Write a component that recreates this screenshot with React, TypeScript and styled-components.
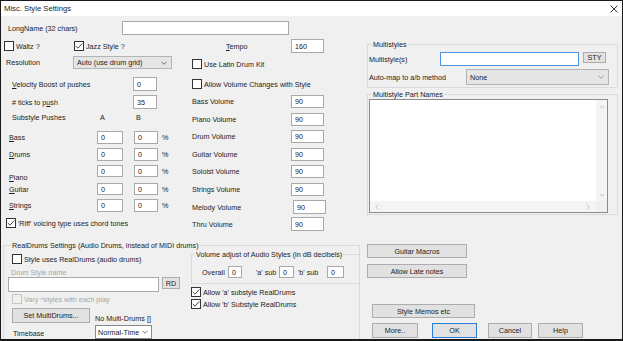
import React from 'react';
import styled, { createGlobalStyle } from 'styled-components';

const Global = createGlobalStyle`
  html, body { margin: 0; padding: 0; background: #fff; }
  body { font-family: "Liberation Sans", Arial, sans-serif; font-size: 7.2px; color: #1c1c1c; }
  * { box-sizing: border-box; }
`;

const Window = styled.div`
  width: 623px; height: 341px;
  border: 1px solid #1a1a1a; border-bottom-width: 2px;
  display: flex; flex-direction: column; background: #f0f0f0; overflow: hidden;
`;
const TitleBar = styled.div`
  height: 15px; flex: none; background: #fff;
  display: flex; align-items: center; justify-content: space-between;
  padding: 0 4px 0 3px; font-size: 7.7px;
`;
const Body = styled.div`
  flex: 1; display: flex; min-height: 0;
`;
const LeftArea = styled.div`
  width: 359px; flex: none; display: flex; flex-direction: column;
`;
const RightArea = styled.div`
  flex: 1; display: flex; flex-direction: column; padding: 24px 0 0 6px;
`;
const Cols = styled.div`
  display: flex; flex: none;
`;
const Col = styled.div<{ $w?: number }>`
  display: flex; flex-direction: column;
  ${p => (p.$w ? `width: ${p.$w}px; flex: none;` : 'flex: 1;')}
`;
const Row = styled.div<{ $mt?: number; $h: number; $pl?: number }>`
  display: flex; align-items: center; flex: none; white-space: nowrap;
  height: ${p => p.$h}px; margin-top: ${p => p.$mt ?? 0}px; padding-left: ${p => p.$pl ?? 0}px;
`;
const Label = styled.span<{ $w?: number; $muted?: boolean; $drop?: number; $ml?: number }>`
  flex: none; line-height: 9px;
  width: ${p => (p.$w ? `${p.$w}px` : 'auto')};
  margin-left: ${p => p.$ml ?? 0}px;
  color: ${p => (p.$muted ? '#a6a6a6' : '#1c1c1c')};
  ${p => (p.$drop !== undefined ? `align-self: flex-start; margin-top: ${p.$drop}px;` : '')}
`;
const Edit = styled.input<{ $w: number; $h?: number; $focus?: boolean; $ml?: number }>`
  flex: none; margin: 0 0 0 ${p => p.$ml ?? 0}px; padding: 0 0 0 3px;
  width: ${p => p.$w}px; height: ${p => (p.$h ? `${p.$h}px` : '100%')};
  border: 1px solid ${p => (p.$focus ? '#4a95d9' : '#a9a9a9')};
  background: #fff; font: inherit; color: #1c1c1c; outline: none;
`;
const Combo = styled.div<{ $w: number; $h?: number; $white?: boolean }>`
  flex: none; width: ${p => p.$w}px; height: ${p => (p.$h ? `${p.$h}px` : '100%')};
  border: 1px solid ${p => (p.$white ? '#8a8a8a' : '#b4b4b4')};
  background: ${p => (p.$white ? '#fff' : '#e5e5e5')};
  display: flex; align-items: center; justify-content: space-between; gap: 1px;
  padding: ${p => (p.$white ? '0 3px 0 2px' : '0 4px 0 3px')}; overflow: hidden;
`;
const ComboText = styled.span`
  overflow: hidden; white-space: nowrap; line-height: 9px;
`;
const Btn = styled.button<{ $w: number; $h?: number; $primary?: boolean; $ml?: number; $top?: boolean }>`
  flex: none; margin: 0 0 0 ${p => p.$ml ?? 0}px; padding: 0;
  width: ${p => p.$w}px; height: ${p => (p.$h ? `${p.$h}px` : '100%')};
  border: 1px solid ${p => (p.$primary ? '#2a7fd4' : '#adadad')};
  background: #e1e1e1; font: inherit; color: #1c1c1c; line-height: 9px;
  ${p => (p.$top ? 'align-self: flex-start;' : '')}
`;
const CheckWrap = styled.label<{ $w?: number }>`
  display: flex; align-items: center; flex: none;
  width: ${p => (p.$w ? `${p.$w}px` : 'auto')};
`;
const Box = styled.span<{ $disabled?: boolean }>`
  width: 10px; height: 10px; flex: none;
  border: 1px solid ${p => (p.$disabled ? '#c6c6c6' : '#333')};
  background: ${p => (p.$disabled ? '#f0f0f0' : '#fff')};
  display: flex; align-items: center; justify-content: center;
`;
const CheckText = styled.span<{ $disabled?: boolean }>`
  margin-left: 2px; line-height: 9px; color: ${p => (p.$disabled ? '#a6a6a6' : '#1c1c1c')};
`;
const Group = styled.fieldset<{ $w: number; $mt?: number; $ml?: number; $pb?: number; $open?: boolean }>`
  margin: ${p => p.$mt ?? 0}px 0 0 ${p => p.$ml ?? 0}px;
  padding: 0 0 ${p => p.$pb ?? 0}px 0;
  width: ${p => p.$w}px; min-width: 0; flex: none;
  border: 1px solid #dadada;
  ${p => (p.$open ? 'border-bottom: none; flex: 1;' : '')}
`;
const Legend = styled.legend<{ $ml: number }>`
  margin-left: ${p => p.$ml}px; padding: 0 1px; line-height: 9px; font-size: 7.2px;
`;
const GroupInner = styled.div<{ $pl?: number }>`
  display: flex; flex-direction: column; padding-left: ${p => p.$pl ?? 0}px;
`;
const DrumsBody = styled.div`
  display: flex;
`;
const ListBox = styled.div`
  margin-left: 1px; width: 239px; height: 114px;
  border: 1px solid #8c8c8c; background: #fff;
  display: grid; grid-template-columns: 1fr 11px; grid-template-rows: 1fr 11px;
`;
const ScrollV = styled.div`
  background: #f4f4f4; display: flex; flex-direction: column; justify-content: space-between;
  align-items: center; padding: 5px 0 4px;
`;
const ScrollH = styled.div`
  background: #f4f4f4; display: flex; justify-content: space-between; align-items: center;
  padding: 0 6px 0 5px;
`;
const Corner = styled.div`
  background: #f0f0f0;
`;
const ListArea = styled.div``;
const BtnRow = styled.div<{ $mt: number; $h: number; $pl?: number }>`
  display: flex; flex: none; height: ${p => p.$h}px; margin-top: ${p => p.$mt}px; padding-left: ${p => p.$pl ?? 0}px;
`;

const Chevron = ({ dir = 'down', color = '#555' }: { dir?: 'down' | 'up' | 'left' | 'right'; color?: string }) => {
  const pts = {
    down: '0.5,0.5 3,3 5.5,0.5',
    up: '0.5,3 3,0.5 5.5,3',
    left: '3,0.5 0.5,3 3,5.5',
    right: '0.5,0.5 3,3 0.5,5.5',
  }[dir];
  const vertical = dir === 'down' || dir === 'up';
  return (
    <svg width={vertical ? 6 : 4} height={vertical ? 4 : 6} viewBox={vertical ? '0 0 6 3.5' : '0 0 3.5 6'} style={{ flex: 'none' }}>
      <polyline points={pts} fill="none" stroke={color} strokeWidth="0.8" />
    </svg>
  );
};

const Check = ({ label, checked, disabled, w }: { label: React.ReactNode; checked?: boolean; disabled?: boolean; w?: number }) => (
  <CheckWrap $w={w}>
    <Box $disabled={disabled}>
      {checked && (
        <svg width="8" height="8" viewBox="0 0 8 8">
          <polyline points="0.8,4 3,6.2 7.3,1.4" fill="none" stroke="#333" strokeWidth="0.9" />
        </svg>
      )}
    </Box>
    <CheckText $disabled={disabled}>{label}</CheckText>
  </CheckWrap>
);

const pushRows = [
  { k: 'B', rest: 'ass', mt: 8, h: 13 },
  { k: 'D', rest: 'rums', mt: 4, h: 13 },
  { k: 'P', rest: 'iano', mt: 4, h: 12, drop: 8 },
  { k: 'G', rest: 'uitar', mt: 6, h: 12 },
  { k: 'S', rest: 'trings', mt: 4, h: 13 },
];

const volRows = [
  { name: 'Bass Volume', mt: 6, h: 13 },
  { name: 'Piano Volume', mt: 5, h: 13 },
  { name: 'Drum Volume', mt: 4, h: 13 },
  { name: 'Guitar Volume', mt: 5, h: 13 },
  { name: 'Soloist Volume', mt: 4, h: 13 },
  { name: 'Strings Volume', mt: 5, h: 13 },
  { name: 'Melody Volume', mt: 4, h: 14, lw: 101 },
  { name: 'Thru Volume', mt: 3, h: 14 },
];

export default function App() {
  return (
    <>
      <Global />
      <Window>
        <TitleBar>
          <span>Misc. Style Settings</span>
          <svg width="8" height="8" viewBox="0 0 8 8">
            <path d="M0.5 0.5 L7.5 7.5 M7.5 0.5 L0.5 7.5" stroke="#222" strokeWidth="0.9" />
          </svg>
        </TitleBar>
        <Body>
          <LeftArea>
            <Row $mt={5} $h={14} $pl={7}>
              <Label $w={114}>LongName (32 chars)</Label>
              <Edit $w={167} readOnly defaultValue="" />
            </Row>
            <Row $mt={4} $h={14} $pl={3}>
              <Check w={70} label="Waltz ?" />
              <Check w={152} checked label="Jazz Style ?" />
              <Label $w={65}><u>T</u>empo</Label>
              <Edit $w={33} readOnly defaultValue="160" />
            </Row>
            <Cols>
              <Col $w={189}>
                <Row $mt={3} $h={13} $pl={5}>
                  <Label $w={67}>Resolution</Label>
                  <Combo $w={99}>
                    <ComboText>Auto (use drum grid)</ComboText>
                    <Chevron />
                  </Combo>
                </Row>
                <Row $mt={8} $h={14} $pl={11}>
                  <Label $w={121}><u>V</u>elocity Boost of pushes</Label>
                  <Edit $w={24} readOnly defaultValue="0" />
                </Row>
                <Row $mt={4} $h={14} $pl={11}>
                  <Label $w={121}># ticks to p<u>u</u>sh</Label>
                  <Edit $w={24} readOnly defaultValue="35" />
                </Row>
                <Row $mt={2} $h={12} $pl={11}>
                  <Label $w={88}>Substyle Pushes</Label>
                  <Label $w={36}>A</Label>
                  <Label>B</Label>
                </Row>
                {pushRows.map(r => (
                  <Row key={r.k} $mt={r.mt} $h={r.h} $pl={8}>
                    <Label $w={88} $drop={r.drop}><u>{r.k}</u>{r.rest}</Label>
                    <Edit $w={26} readOnly defaultValue="0" />
                    <Edit $w={24} $ml={11} readOnly defaultValue="0" />
                    <Label $ml={4}>%</Label>
                  </Row>
                ))}
                <Row $mt={6} $h={10} $pl={5}>
                  <Check checked label="'Riff' voicing type uses chord tones" />
                </Row>
              </Col>
              <Col>
                <Row $mt={6} $h={10} $pl={2}>
                  <Check label="Use Latin Drum Kit" />
                </Row>
                <Row $mt={10} $h={10} $pl={2}>
                  <Check label="Allow Volume Changes with Style" />
                </Row>
                {volRows.map(r => (
                  <Row key={r.name} $mt={r.mt} $h={r.h} $pl={2}>
                    <Label $w={r.lw ?? 99}>{r.name}</Label>
                    <Edit $w={33} readOnly defaultValue="90" />
                  </Row>
                ))}
              </Col>
            </Cols>
            <Group $w={357} $mt={10} $ml={2} $open>
              <Legend $ml={7}>RealDrums Settings (Audio Drums, instead of MIDI drums)</Legend>
              <DrumsBody>
                <Col $w={184}>
                  <Row $mt={4} $h={10} $pl={8}>
                    <Check label="Style uses RealDrums (audio drums)" />
                  </Row>
                  <Row $mt={3} $h={10} $pl={7}>
                    <Label $muted>Drum Style name</Label>
                  </Row>
                  <Row $mt={0} $h={15} $pl={4}>
                    <Edit $w={151} readOnly defaultValue="" />
                    <Btn $w={18} $h={12} $ml={3} $top>RD</Btn>
                  </Row>
                  <Row $mt={2} $h={10} $pl={8}>
                    <Check disabled label="Vary ^styles with each play" />
                  </Row>
                  <Row $mt={4} $h={15} $pl={8}>
                    <Btn $w={78}>Set MultiDrums...</Btn>
                    <Label $ml={5} $drop={6}>No Multi-Drums []</Label>
                  </Row>
                  <Row $mt={2} $h={14} $pl={9}>
                    <Label $w={82} $drop={4}>Timebase</Label>
                    <Combo $w={57} $white>
                      <ComboText>Normal-Time</ComboText>
                      <Chevron />
                    </Combo>
                  </Row>
                </Col>
                <Col>
                  <Group $w={169} $ml={3} $pb={5}>
                    <Legend $ml={3}>Volume adjust of Audio Styles (in dB decibels)</Legend>
                    <Row $mt={7} $h={12} $pl={10}>
                      <Label $w={26}>Overall</Label>
                      <Edit $w={14} readOnly defaultValue="0" />
                      <Label $w={23} $ml={14}>'a' sub</Label>
                      <Edit $w={15} readOnly defaultValue="0" />
                      <Label $w={29} $ml={4}>'b' sub</Label>
                      <Edit $w={17} readOnly defaultValue="0" />
                    </Row>
                  </Group>
                  <Row $mt={3} $h={10} $pl={3}>
                    <Check checked label="Allow 'a' substyle RealDrums" />
                  </Row>
                  <Row $mt={2} $h={10} $pl={3}>
                    <Check checked label="Allow 'b' Substyle RealDrums" />
                  </Row>
                </Col>
              </DrumsBody>
            </Group>
          </LeftArea>
          <RightArea>
            <Group $w={251} $ml={1} $pb={2}>
              <Legend $ml={4}>Multistyles</Legend>
              <GroupInner $pl={1}>
                <Row $mt={3} $h={14}>
                  <Label $w={71}>Multistyle(s)</Label>
                  <Edit $w={139} $focus readOnly defaultValue="" />
                  <Btn $w={23} $h={11} $ml={4} $top>STY</Btn>
                </Row>
                <Row $mt={3} $h={16}>
                  <Label $w={97}>Auto-map to a/b method</Label>
                  <Combo $w={143}>
                    <ComboText>None</ComboText>
                    <Chevron color="#888" />
                  </Combo>
                </Row>
              </GroupInner>
            </Group>
            <Group $w={251} $ml={1} $mt={2} $pb={1}>
              <Legend $ml={4}>Multistyle Part Names</Legend>
              <ListBox>
                <ListArea />
                <ScrollV>
                  <Chevron dir="up" color="#b8b8b8" />
                  <Chevron dir="down" color="#b8b8b8" />
                </ScrollV>
                <ScrollH>
                  <Chevron dir="left" color="#b8b8b8" />
                  <Chevron dir="right" color="#b8b8b8" />
                </ScrollH>
                <Corner />
              </ListBox>
            </Group>
            <BtnRow $mt={29} $h={14} $pl={1}>
              <Btn $w={100}>Guitar Macros</Btn>
            </BtnRow>
            <BtnRow $mt={6} $h={14} $pl={1}>
              <Btn $w={100}>Allow Late notes</Btn>
            </BtnRow>
            <BtnRow $mt={26} $h={14} $pl={6}>
              <Btn $w={103}>Style Memos etc</Btn>
            </BtnRow>
            <BtnRow $mt={5} $h={15} $pl={6}>
              <Btn $w={46}>More..</Btn>
              <Btn $w={45} $ml={14} $primary>OK</Btn>
              <Btn $w={44} $ml={11}>Cancel</Btn>
              <Btn $w={45} $ml={6}>Help</Btn>
            </BtnRow>
          </RightArea>
        </Body>
      </Window>
    </>
  );
}
